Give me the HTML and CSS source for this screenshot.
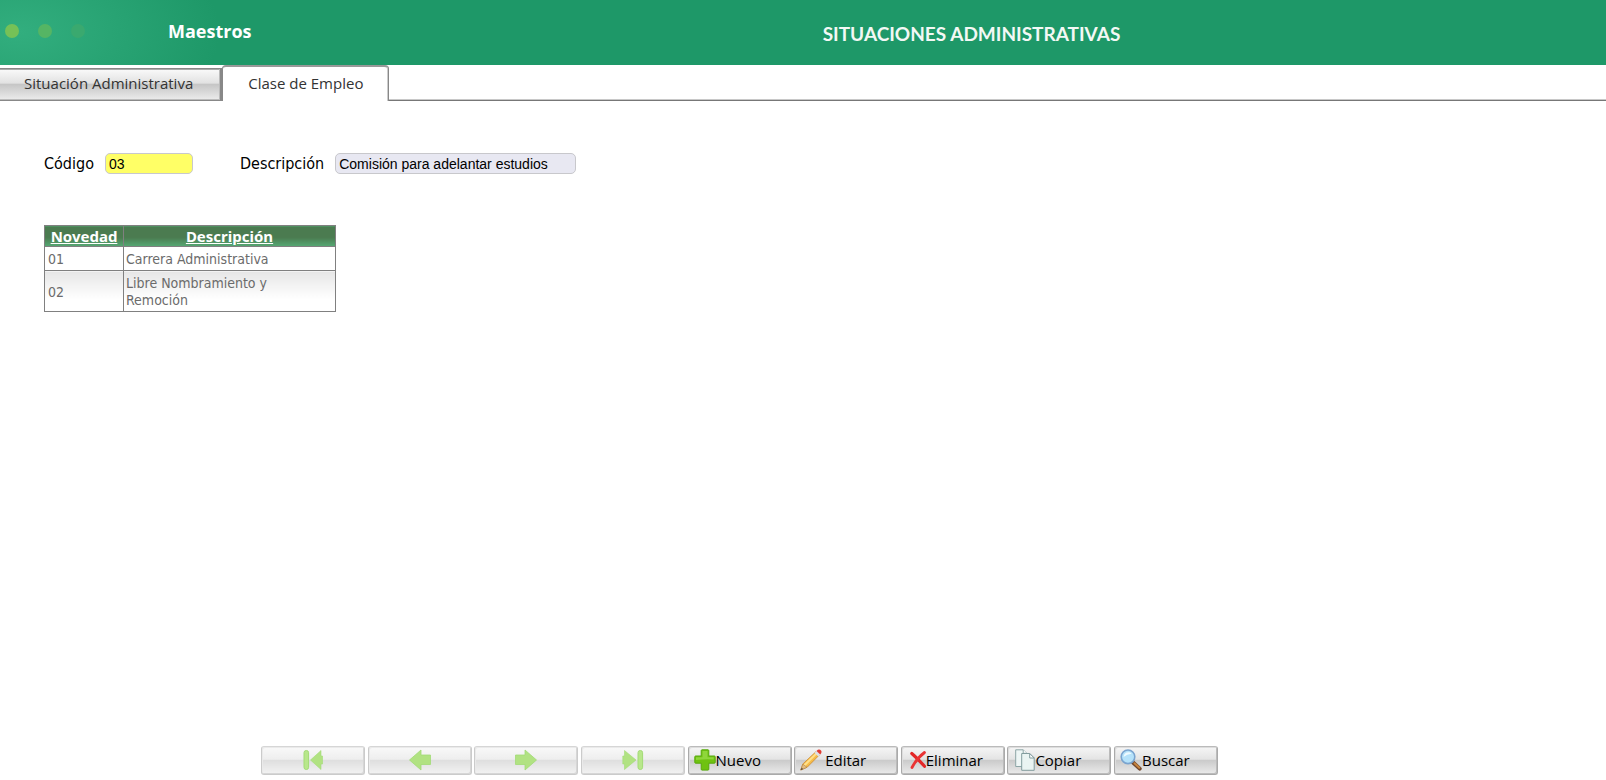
FILE: index.html
```html
<!DOCTYPE html>
<html lang="es">
<head>
    <meta charset="UTF-8">
    <meta name="viewport" content="width=device-width, initial-scale=1.0">
    <title>Situaciones Administrativas</title>
    <link rel="stylesheet" href="styles.css">
</head>
<body>
    <header class="header">
        <div class="brand">
            <span class="dot dot-1"></span>
            <span class="dot dot-2"></span>
            <span class="dot dot-3"></span>
            <span class="module">Maestros</span>
        </div>
        <h1 class="title">SITUACIONES ADMINISTRATIVAS</h1>
    </header>

    <div class="tabs" role="tablist">
        <button type="button" class="tab" role="tab" aria-selected="false">Situación Administrativa</button>
        <button type="button" class="tab active" role="tab" aria-selected="true">Clase de Empleo</button>
        <div class="tab-line"></div>
    </div>

    <main class="content">
        <form class="fields">
            <label for="codigo">Código</label>
            <input type="text" id="codigo" class="field code" value="03">
            <label for="descripcion">Descripción</label>
            <input type="text" id="descripcion" class="field desc" value="Comisión para adelantar estudios" readonly>
        </form>

        <table class="grid">
            <thead>
                <tr>
                    <th class="col-code"><a href="#">Novedad</a></th>
                    <th class="col-desc"><a href="#">Descripción</a></th>
                </tr>
            </thead>
            <tbody>
                <tr>
                    <td>01</td>
                    <td>Carrera Administrativa</td>
                </tr>
                <tr class="alt">
                    <td>02</td>
                    <td>Libre Nombramiento y Remoción</td>
                </tr>
            </tbody>
        </table>
    </main>

    <div class="toolbar">
        <button type="button" class="btn nav" aria-label="Primero" disabled>
            <svg width="20" height="22" viewBox="0 0 20 22">
                <rect x="1" y="1.5" width="4.6" height="19" rx="2.2" fill="#8ad83f" stroke="#66c41c"/>
                <path d="M7.500 11 18 1.500V7h1.500v8H18v5.500z" fill="#7ed030" stroke="#66c41c" stroke-width=".6"/>
            </svg>
        </button>
        <button type="button" class="btn nav" aria-label="Anterior" disabled>
            <svg width="22" height="22" viewBox="0 0 22 22">
                <path d="M.5 11 12 1v5h9.500v9.500H12V21z" fill="#7ed030" stroke="#66c41c" stroke-width=".8"/>
            </svg>
        </button>
        <button type="button" class="btn nav" aria-label="Siguiente" disabled>
            <svg width="22" height="22" viewBox="0 0 22 22">
                <path d="M21.500 11 10 1v5H.5v9.500H10V21z" fill="#7ed030" stroke="#66c41c" stroke-width=".8"/>
            </svg>
        </button>
        <button type="button" class="btn nav" aria-label="Último" disabled>
            <svg width="22" height="22" viewBox="0 0 22 22">
                <path d="M14 11 2.500 1.500V7H.8v8h1.700v5.500z" fill="#7ed030" stroke="#66c41c" stroke-width=".6"/>
                <rect x="16" y="1.500" width="4.600" height="19" rx="2.200" fill="#8ad83f" stroke="#66c41c"/>
            </svg>
        </button>
        <button type="button" class="btn">
            <svg width="22" height="22" viewBox="0 0 22 22">
                <path d="M8 .8h6q.8 0 .8.8V7h5.600q.8 0 .8.800v5.600q0 .8-.8.8h-5.600v6q0 .9-.8.900H8q-.8 0-.8-.9v-6H1.600q-.8 0-.8-.8V7.800q0-.8.8-.8h5.600V1.600q0-.8.8-.8z" fill="#6fc211" stroke="#57a80c"/>
                <path d="M8.500 2h5v6.200h6.200v2.300Q11 10 2 11V8.200h6.500z" fill="#8fd63b"/>
            </svg>
            <span>Nuevo</span>
        </button>
        <button type="button" class="btn edit">
            <svg width="22" height="22" viewBox="0 0 22 22">
                <path d="M15.800 2.800 19.300 6 7.200 18.200.8 21l2-6z" fill="#f6bc48" stroke="#cb8932" stroke-width=".8"/>
                <path d="M15.500 4 17 5.200 5 17.200 3.600 15.600z" fill="#ffe08a"/>
                <path d="M2.800 15.200 7 18.300.8 21z" fill="#e2bd83" stroke="#a77a44" stroke-width=".5"/>
                <path d="M1.600 18.800 3.200 20 .5 21.300z" fill="#5a4b3b"/>
                <path d="m14.500 3.800 2-1.800 3.700 3.500-1.900 2z" fill="#dde1e7"/>
                <path d="m16.500 2 1.300-1.200q2-.9 3.400 1 .9 1.700-1 3.700z" fill="#df3b32"/>
            </svg>
            <span>Editar</span>
        </button>
        <button type="button" class="btn delete">
            <svg width="16" height="20" viewBox="0 0 16 20">
                <path d="M1.800 3.500Q7 8 14.500 16.300" fill="none" stroke="#e32727" stroke-width="3.200" stroke-linecap="round"/>
                <path d="M14.500 2.500Q7 8 2 17.500" fill="none" stroke="#e93434" stroke-width="2.800" stroke-linecap="round"/>
            </svg>
            <span>Eliminar</span>
        </button>
        <button type="button" class="btn copy">
            <svg width="20" height="22" viewBox="0 0 20 22">
                <path d="M.7.8h7.500l3.500 3.500v13.200H.7z" fill="#eef6f5" stroke="#8da5a6"/>
                <path d="M8.200.8v3.500h3.500" fill="#fff" stroke="#8da5a6"/>
                <path d="M6.700 4.500h8l4.500 4.500v12.300H6.700z" fill="#eaf4f2" stroke="#829c9d"/>
                <path d="M14.700 4.500V9h4.500z" fill="#fff" stroke="#829c9d"/>
            </svg>
            <span>Copiar</span>
        </button>
        <button type="button" class="btn search">
            <svg width="22" height="22" viewBox="0 0 22 22">
                <path d="m12.500 13 7.200 6.600" stroke="#70452b" stroke-width="4" stroke-linecap="round"/>
                <path d="m14.500 14.300 4.800 4.500" stroke="#c6843f" stroke-width="2" stroke-linecap="round"/>
                <circle cx="8" cy="7.800" r="6.800" fill="#b5e2fa" stroke="#7aa4cf" stroke-width="1.600"/>
                <path d="M3.500 8Q4 3 9 3.200q2 .3 2.600 1.600Q7 5 3.500 8z" fill="#eefaff"/>
            </svg>
            <span>Buscar</span>
        </button>
    </div>
</body>
</html>
```
FILE: styles.css
```css
body {
    margin: 0;
    min-height: 100vh;
    display: flex;
    flex-direction: column;
    background-color: #fff;
    font-family: "DejaVu Sans Condensed", Tahoma, sans-serif;
    font-size: 16px;
    color: #000;
}
/* Header */
.header {
    display: flex;
    height: 65px;
    background-color: #1e9868;
    color: #fff;
}
.brand {
    display: flex;
    align-items: center;
    box-sizing: border-box;
    width: 337px;
    padding: 0 0 3px 5px;
    background: radial-gradient(ellipse 200px 110px at 20px 32px, #32ae7e, #1e9868);
}
.dot {
    width: 14px;
    height: 14px;
    margin-right: 19px;
    border-radius: 50%;
    background-color: #76c157;
}
.dot-2 {
    background-color: #55b564;
}
.dot-3 {
    background-color: #3aa96f;
}
.module {
    margin-left: 64px;
    font-family: "Open Sans", sans-serif;
    font-size: 18px;
    font-weight: bold;
}
.title {
    flex: 1;
    margin: 0;
    padding-top: 3px;
    text-align: center;
    font-family: Lato, sans-serif;
    font-size: 19px;
    line-height: 62px;
    font-weight: bold;
    color: #f3f8f5;
}
/* Tabs */
.tabs {
    display: flex;
    align-items: flex-end;
    height: 36px;
}
.tab {
    box-sizing: border-box;
    height: 33px;
    padding: 0 27px 3px 24px;
    border: solid #888;
    border-width: 1px 2px 1px 0;
    background: linear-gradient(#fafafa, #e2e2e2 45%, #c6c6c6 50%, #ececec);
    box-shadow: inset -1px -1px #bbb, inset 0 1px #aaa;
    font-family: "Open Sans", sans-serif;
    font-size: 15px;
    color: #333;
}
.tab.active {
    height: 36px;
    padding: 0 25px 2px;
    border-width: 2px 1px 0 1px;
    border-top-color: #999;
    border-radius: 4px 4px 0 0;
    background: #fff;
    box-shadow: inset -1px 0 #ccc;
}
.tab-line {
    flex: 1;
    height: 1px;
    border-top: 1px solid #c8c8c8;
    background-color: #777;
}
/* Form */
.content {
    padding: 52px 44px 40px;
}
.fields {
    display: flex;
    align-items: center;
    height: 21px;
}
.fields label {
    margin-right: 11px;
}
.field {
    box-sizing: border-box;
    height: 21px;
    padding: 1px 3px;
    border: 1px solid #c8c8cc;
    border-radius: 5px;
    background-color: #e8e8f2;
    font-family: "Liberation Sans", Arial, sans-serif;
    font-size: 14px;
    color: #000;
}
.code {
    width: 88px;
    margin-right: 47px;
    background-color: #ffff66;
}
.desc {
    width: 241px;
}
/* Table */
.grid {
    width: 292px;
    margin-top: 51px;
    border-collapse: collapse;
    table-layout: fixed;
    font-size: 14px;
    line-height: 17px;
    color: #6b6b6b;
}
.grid th {
    height: 20px;
    padding: 0;
    border: 1px solid #808080;
    background: linear-gradient(#4b7b50 55%, #55a974);
    font-family: "Noto Sans", sans-serif;
    font-size: 15px;
}
.grid th a {
    color: #fff;
}
.grid td {
    padding: 4px 50px 2px 2px;
    border: 1px solid #808080;
}
.grid td:first-child {
    padding-left: 3px;
    padding-right: 2px;
}
.grid .alt td {
    height: 33px;
    background: linear-gradient(#e6e6e6, #fff 70%);
}
.col-code {
    width: 78px;
}
/* Buttons */
.toolbar {
    display: flex;
    justify-content: space-between;
    box-sizing: border-box;
    width: 957px;
    margin: auto 0 5px 261px;
}
.btn {
    display: flex;
    align-items: center;
    box-sizing: border-box;
    width: 104px;
    height: 29px;
    padding: 0 5px 1px;
    border: 1px solid #aaa;
    border-top-color: #bbb;
    border-radius: 3px;
    background: linear-gradient(#f6f6f6, #e4e4e4 45%, #cbcbcb 50%, #ebebeb);
    box-shadow: inset -1px -1px #bbb, inset 1px 1px #ddd;
    font-family: "Open Sans", sans-serif;
    font-size: 15px;
    color: #000;
}
.nav {
    justify-content: center;
    opacity: 0.6;
}
.edit span {
    margin-left: 3px;
}
.delete {
    padding-left: 8px;
}
.copy {
    padding-left: 7px;
}
```
